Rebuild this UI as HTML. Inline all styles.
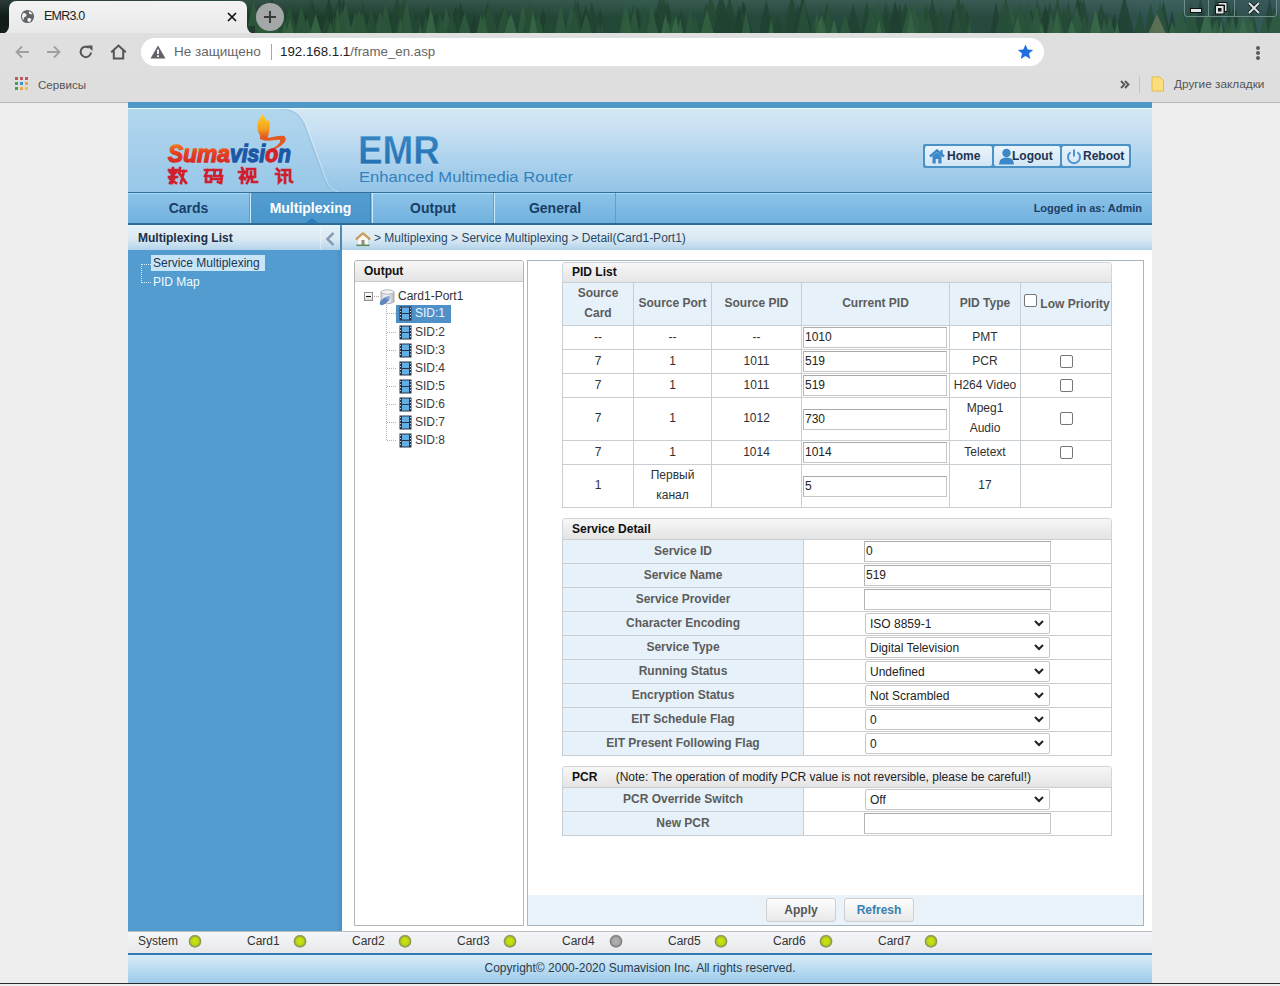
<!DOCTYPE html>
<html><head><meta charset="utf-8">
<style>
*{box-sizing:border-box;margin:0;padding:0}
html,body{width:1280px;height:986px;overflow:hidden}
body{position:relative;background:#eeeeee;font-family:"Liberation Sans",sans-serif;font-size:12px;color:#000}
.a{position:absolute}
/* chrome */
#tabstrip{left:0;top:0;width:1280px;height:33px;background:linear-gradient(90deg,#16231f 0%,#203a2f 15%,#24412f 35%,#2a4a38 55%,#2f5141 75%,#3a5c52 100%)}
#tab{left:9px;top:1px;width:238px;height:33px;background:linear-gradient(180deg,#f3f3f3,#e8e8e8);border-radius:7px 7px 0 0}
#toolbar{left:0;top:33px;width:1280px;height:37px;background:#dfdfdf}
#bookbar{left:0;top:70px;width:1280px;height:33px;background:#dedede;border-bottom:1px solid #b9b9b9}
#omni{left:141px;top:38px;width:903px;height:28px;background:#fff;border-radius:14px}
.ui{font-family:"Liberation Sans",sans-serif;color:#333;white-space:nowrap}
/* page */
#topbar{left:128px;top:102px;width:1024px;height:6px;background:#4f98c7}
#hdr{left:128px;top:108px;width:1024px;height:84px;background:linear-gradient(180deg,#d3e8f6 0%,#c6e1f3 45%,#9fcbe9 100%);border-top:1px solid #e8fbff;overflow:hidden}
#nav{left:128px;top:192px;width:1024px;height:33px;background:linear-gradient(180deg,#a6daf5 0px,#a6daf5 1px,#8cc3e7 1px,#7fbae4 50%,#70b3df 100%);border-top:1px solid #2f6f9a;border-bottom:2px solid #2d6c98}
.navi{position:absolute;top:0;height:30px;text-align:center;line-height:31px;font-size:14px;font-weight:bold;color:#173e66}
#side{left:128px;top:225px;width:214px;height:706px;background:#529ccf}
.lbar{background:linear-gradient(180deg,#e8f6fd 0px,#e8f6fd 1px,#e4eff8 2px,#dbe9f4 55%,#c9e0f0 75%,#b3d3ea 100%)}
#sidehdr{left:0;top:0;width:212px;height:25px;font-weight:bold;color:#1c2f45;line-height:26px;padding-left:10px}
#crumb{left:342px;top:225px;width:810px;height:25px;color:#1c3f66;line-height:26px}
#content{left:342px;top:250px;width:810px;height:681px;background:#fff}
#status{left:128px;top:931px;width:1024px;height:22px;background:linear-gradient(180deg,#f4f6f9,#e8e8ea);border-top:1px solid #bcbcbc}
#copy{left:128px;top:953px;width:1024px;height:30px;background:linear-gradient(180deg,#d9ecf8 0%,#9ccbeb 100%);border-top:2px solid #2f7bb3;text-align:center;line-height:27px;color:#2b3b4b}
.stl{position:absolute;top:934px;font-size:12px;color:#333}
.led{position:absolute;top:934px;width:14px;height:14px;border-radius:50%;background:radial-gradient(circle closest-side at 50% 52%,#cce414 0%,#bed80e 55%,#a5b82a 68%,#8b9560 84%,#b4bb98 94%,rgba(236,240,220,0.5) 100%)}
.led.off{background:radial-gradient(circle closest-side at 50% 52%,#b2b2b2 0%,#a6a6a6 55%,#969696 68%,#7d7d7d 84%,#b0b0b0 94%,rgba(236,236,236,0.5) 100%)}
/* panels */
.box{position:absolute;border:1px solid #b4b4b4;background:#fff;border-radius:3px 3px 0 0}
.bhdr{border-radius:2px 2px 0 0}
.bhdr{position:absolute;left:0;top:0;right:0;height:21px;background:linear-gradient(180deg,#f7f7f7 0%,#e4e4e4 100%);border-bottom:1px solid #c8c8c8;font-weight:bold;line-height:20px;padding-left:9px;color:#111}
table{border-collapse:collapse;position:absolute;table-layout:fixed}
td,th{padding-bottom:2px!important}
td .inp{position:relative;top:1px}
td .selx{top:1px}
td,th{border:1px solid #c9ced2;text-align:center;font-size:12px;color:#303030;font-weight:normal;padding:0;line-height:20px}
th{background:#e6f1f9;color:#5c5c5c;font-weight:bold}
td.lb{background:#e6f1f9;color:#5c5c5c;font-weight:bold}
.inp{display:block;border:1px solid #c6c6c6;border-top-color:#a9a9a9;border-left-color:#b5b5b5;height:21px;background:#fff;text-align:left;padding-left:1px;line-height:19px;font-size:12px;color:#222}
.sel{position:absolute;border:1px solid #c6c6c6;height:20px;background:#fff;text-align:left;padding-left:4px;line-height:18px;font-size:12px;color:#222}
.chk{display:inline-block;width:13px;height:13px;border:1px solid #767676;border-radius:2px;background:#fff;vertical-align:middle}
.btn{position:absolute;top:898px;width:70px;height:24px;border:1px solid #cfcfcf;border-radius:3px;background:linear-gradient(180deg,#fdfdfd 0%,#e9e9e9 100%);font-size:12px;font-weight:bold;text-align:center;line-height:22px}
.selx{position:relative;display:block;border:1px solid #c6c6c6;border-radius:2px;width:185px;height:21px;background:#fff;text-align:left;padding-left:4px;line-height:21px;font-size:12px;color:#222}
.hb{position:absolute;top:37px;height:20px;background:linear-gradient(180deg,#eaf4fb 0%,#d3e6f4 100%);border-radius:2px;font-weight:bold;color:#1b3552;font-size:12px;line-height:20px;text-align:right;padding-right:6px}
.hbt{position:absolute;top:37px;font-weight:bold;color:#1b3552;font-size:12px;line-height:21px;white-space:nowrap}
.tree{position:absolute;font-size:12px;color:#222;white-space:nowrap}
</style></head><body>
<div id="tabstrip" class="a"><svg width="1280" height="34" style="position:absolute;left:0;top:0">
<defs>
<linearGradient id="sky" x1="0" y1="0" x2="1" y2="0"><stop offset="0" stop-color="#101a17"/><stop offset="0.2" stop-color="#1c3a2a"/><stop offset="0.5" stop-color="#23493a"/><stop offset="0.8" stop-color="#27493f"/><stop offset="1" stop-color="#345a5c"/></linearGradient>
<linearGradient id="skyv" x1="0" y1="0" x2="0" y2="1"><stop offset="0" stop-color="#5a7a78" stop-opacity="0.35"/><stop offset="0.5" stop-color="#5a7a78" stop-opacity="0"/></linearGradient>
</defs>
<rect width="1280" height="34" fill="url(#sky)"/>
<rect width="1280" height="34" fill="url(#skyv)"/>
<g opacity="0.75"><path d="M578.1 34 L583.5 12.7 L589.0 34Z" fill="#1d3d2c"/>
<path d="M1090.9 34 L1095.9 13.9 L1100.9 34Z" fill="#214430"/>
<path d="M283.6 34 L288.6 6.5 L293.7 34Z" fill="#1d3d2c"/>
<path d="M812.8 34 L817.6 14.7 L822.3 34Z" fill="#214430"/>
<path d="M893.9 34 L899.5 3.2 L905.2 34Z" fill="#1e4030"/>
<path d="M295.5 34 L301.1 11.1 L306.7 34Z" fill="#214430"/>
<path d="M544.3 34 L548.3 12.8 L552.3 34Z" fill="#244a33"/>
<path d="M820.9 34 L827.1 1.0 L833.3 34Z" fill="#214430"/>
<path d="M628.1 34 L633.6 3.9 L639.1 34Z" fill="#1d3d2c"/>
<path d="M880.6 34 L887.6 5.1 L894.6 34Z" fill="#244a33"/>
<path d="M721.1 34 L729.6 -4.3 L738.0 34Z" fill="#214430"/>
<path d="M1061.4 34 L1068.2 0.6 L1075.1 34Z" fill="#244a33"/>
<path d="M781.0 34 L791.0 -3.3 L800.9 34Z" fill="#244a33"/>
<path d="M872.5 34 L877.2 14.4 L881.9 34Z" fill="#214430"/>
<path d="M1024.8 34 L1029.9 12.7 L1034.9 34Z" fill="#1d3d2c"/>
<path d="M1236.1 34 L1240.9 14.3 L1245.7 34Z" fill="#244a33"/>
<path d="M594.2 34 L600.3 8.3 L606.4 34Z" fill="#1e4030"/>
<path d="M316.6 34 L320.8 13.9 L325.0 34Z" fill="#1d3d2c"/>
<path d="M303.9 34 L312.5 0.6 L321.0 34Z" fill="#1e4030"/>
<path d="M536.3 34 L543.1 7.5 L550.0 34Z" fill="#1d3d2c"/>
<path d="M1212.4 34 L1218.9 8.2 L1225.4 34Z" fill="#1e4030"/>
<path d="M304.1 34 L310.7 -0.9 L317.4 34Z" fill="#214430"/>
<path d="M650.8 34 L659.8 -4.2 L668.9 34Z" fill="#214430"/>
<path d="M704.1 34 L712.7 3.9 L721.3 34Z" fill="#1e4030"/>
<path d="M1134.4 34 L1139.9 9.9 L1145.4 34Z" fill="#244a33"/>
<path d="M947.8 34 L953.2 7.6 L958.6 34Z" fill="#1d3d2c"/>
<path d="M426.8 34 L431.5 10.9 L436.2 34Z" fill="#1e4030"/>
<path d="M1101.4 34 L1106.0 12.0 L1110.7 34Z" fill="#214430"/>
<path d="M675.1 34 L681.5 7.9 L687.9 34Z" fill="#214430"/>
<path d="M953.8 34 L961.2 4.7 L968.6 34Z" fill="#1d3d2c"/>
<path d="M709.4 34 L720.3 -3.2 L731.3 34Z" fill="#1e4030"/>
<path d="M653.7 34 L660.0 7.3 L666.3 34Z" fill="#1e4030"/>
<path d="M310.2 34 L314.1 14.5 L318.0 34Z" fill="#214430"/>
<path d="M357.4 34 L363.2 2.8 L369.1 34Z" fill="#214430"/>
<path d="M792.9 34 L802.7 -4.9 L812.5 34Z" fill="#1d3d2c"/>
<path d="M1144.5 34 L1150.6 2.5 L1156.7 34Z" fill="#244a33"/>
<path d="M1226.8 34 L1234.1 2.7 L1241.5 34Z" fill="#1d3d2c"/>
<path d="M1115.1 34 L1124.4 -5.8 L1133.7 34Z" fill="#1e4030"/>
<path d="M565.5 34 L571.2 12.8 L576.9 34Z" fill="#244a33"/>
<path d="M735.0 34 L743.0 0.8 L750.9 34Z" fill="#214430"/>
<path d="M1223.8 34 L1229.5 4.4 L1235.2 34Z" fill="#1d3d2c"/>
<path d="M1024.6 34 L1030.9 9.4 L1037.2 34Z" fill="#1d3d2c"/>
<path d="M961.8 34 L967.1 10.3 L972.3 34Z" fill="#214430"/>
<path d="M610.8 34 L616.4 11.1 L621.9 34Z" fill="#244a33"/>
<path d="M896.9 34 L905.5 2.5 L914.1 34Z" fill="#214430"/>
<path d="M1070.6 34 L1080.3 -2.0 L1089.9 34Z" fill="#214430"/>
<path d="M448.2 34 L455.9 5.2 L463.6 34Z" fill="#1d3d2c"/>
<path d="M1058.2 34 L1063.8 5.6 L1069.5 34Z" fill="#244a33"/>
<path d="M699.1 34 L710.6 -4.6 L722.2 34Z" fill="#244a33"/>
<path d="M328.2 34 L333.0 13.8 L337.7 34Z" fill="#244a33"/>
<path d="M451.4 34 L460.5 2.3 L469.6 34Z" fill="#1d3d2c"/>
<path d="M735.0 34 L743.9 1.6 L752.8 34Z" fill="#1d3d2c"/>
<path d="M1105.1 34 L1109.7 13.4 L1114.3 34Z" fill="#214430"/>
<path d="M736.4 34 L742.4 12.1 L748.4 34Z" fill="#244a33"/>
<path d="M329.1 34 L339.4 -4.8 L349.6 34Z" fill="#1e4030"/>
<path d="M653.1 34 L663.4 -4.8 L673.7 34Z" fill="#214430"/>
<path d="M1268.3 34 L1272.9 15.4 L1277.5 34Z" fill="#1e4030"/>
<path d="M1074.8 34 L1080.7 12.8 L1086.6 34Z" fill="#1e4030"/>
<path d="M920.7 34 L927.0 8.3 L933.2 34Z" fill="#214430"/>
<path d="M262.6 34 L272.0 -1.6 L281.5 34Z" fill="#1d3d2c"/>
<path d="M783.5 34 L792.4 -4.5 L801.2 34Z" fill="#214430"/>
<path d="M1096.3 34 L1100.9 11.4 L1105.6 34Z" fill="#244a33"/>
<path d="M758.7 34 L766.2 -0.8 L773.7 34Z" fill="#1e4030"/>
<path d="M1104.0 34 L1109.2 14.7 L1114.4 34Z" fill="#1e4030"/>
<path d="M923.7 34 L932.3 -1.9 L941.0 34Z" fill="#214430"/>
<path d="M792.5 34 L797.8 4.5 L803.0 34Z" fill="#1e4030"/>
<path d="M1041.3 34 L1049.8 2.6 L1058.3 34Z" fill="#214430"/>
<path d="M420.0 34 L427.5 5.6 L435.1 34Z" fill="#1d3d2c"/>
<path d="M578.6 34 L585.8 4.6 L592.9 34Z" fill="#1d3d2c"/>
<path d="M1155.9 34 L1159.7 14.7 L1163.6 34Z" fill="#1d3d2c"/>
<path d="M1038.3 34 L1045.4 4.8 L1052.6 34Z" fill="#1d3d2c"/>
<path d="M699.0 34 L706.5 2.5 L714.0 34Z" fill="#214430"/>
<path d="M956.8 34 L963.5 6.0 L970.3 34Z" fill="#1e4030"/>
<path d="M767.3 34 L773.0 10.6 L778.6 34Z" fill="#244a33"/>
<path d="M1192.9 34 L1200.5 -3.6 L1208.0 34Z" fill="#1e4030"/>
<path d="M386.5 34 L391.2 13.3 L396.0 34Z" fill="#1d3d2c"/>
<path d="M935.8 34 L941.3 6.6 L946.8 34Z" fill="#244a33"/>
<path d="M1050.1 34 L1057.5 -3.7 L1064.8 34Z" fill="#244a33"/>
<path d="M386.2 34 L397.3 -3.4 L408.3 34Z" fill="#214430"/>
<path d="M1013.4 34 L1019.1 13.9 L1024.8 34Z" fill="#214430"/>
<path d="M1262.5 34 L1269.6 -2.3 L1276.7 34Z" fill="#1e4030"/>
<path d="M1267.8 34 L1273.9 7.1 L1280.0 34Z" fill="#244a33"/>
<path d="M572.1 34 L578.1 0.1 L584.1 34Z" fill="#1e4030"/>
<path d="M699.7 34 L703.7 15.6 L707.7 34Z" fill="#244a33"/>
<path d="M771.8 34 L777.6 14.6 L783.4 34Z" fill="#214430"/>
<path d="M1246.6 34 L1250.8 13.7 L1255.1 34Z" fill="#1d3d2c"/>
<path d="M1177.1 34 L1183.1 12.0 L1189.0 34Z" fill="#1e4030"/>
<path d="M1115.4 34 L1125.1 1.1 L1134.7 34Z" fill="#1e4030"/>
<path d="M394.4 34 L403.8 -4.2 L413.3 34Z" fill="#244a33"/>
<path d="M337.1 34 L342.1 14.7 L347.2 34Z" fill="#1e4030"/>
<path d="M1167.9 34 L1172.1 10.1 L1176.4 34Z" fill="#1d3d2c"/>
<path d="M1070.1 34 L1075.7 14.2 L1081.3 34Z" fill="#1d3d2c"/>
<path d="M518.7 34 L522.4 13.3 L526.0 34Z" fill="#1e4030"/>
<path d="M1199.9 34 L1204.5 10.1 L1209.0 34Z" fill="#214430"/>
<path d="M1208.1 34 L1216.3 -5.3 L1224.4 34Z" fill="#214430"/>
<path d="M452.5 34 L457.8 9.1 L463.1 34Z" fill="#214430"/>
<path d="M542.9 34 L548.7 5.0 L554.4 34Z" fill="#244a33"/>
<path d="M1070.6 34 L1077.8 -5.9 L1085.0 34Z" fill="#1d3d2c"/>
<path d="M999.1 34 L1005.1 3.9 L1011.1 34Z" fill="#1e4030"/>
<path d="M495.9 34 L503.0 6.2 L510.2 34Z" fill="#1e4030"/>
<path d="M917.6 34 L926.2 4.0 L934.8 34Z" fill="#244a33"/>
<path d="M949.7 34 L958.4 -5.6 L967.0 34Z" fill="#214430"/>
<path d="M662.2 34 L666.8 8.4 L671.5 34Z" fill="#214430"/>
<path d="M255.6 34 L264.7 2.2 L273.7 34Z" fill="#1e4030"/>
<path d="M412.6 34 L418.1 14.1 L423.7 34Z" fill="#244a33"/>
<path d="M860.7 34 L866.7 0.8 L872.7 34Z" fill="#214430"/>
<path d="M406.5 34 L412.3 6.2 L418.0 34Z" fill="#244a33"/>
<path d="M1245.6 34 L1251.8 4.0 L1258.0 34Z" fill="#244a33"/>
<path d="M469.6 34 L474.4 12.0 L479.2 34Z" fill="#1d3d2c"/>
<path d="M733.1 34 L738.9 4.9 L744.7 34Z" fill="#1d3d2c"/>
<path d="M336.6 34 L343.6 -2.0 L350.5 34Z" fill="#1d3d2c"/>
<path d="M649.6 34 L655.8 9.4 L662.0 34Z" fill="#1d3d2c"/>
<path d="M845.2 34 L853.2 4.4 L861.1 34Z" fill="#1e4030"/>
<path d="M1029.2 34 L1037.2 0.1 L1045.3 34Z" fill="#244a33"/>
<path d="M990.1 34 L995.9 1.8 L1001.7 34Z" fill="#1e4030"/>
<path d="M999.0 34 L1005.9 -1.9 L1012.8 34Z" fill="#1d3d2c"/>
<path d="M1092.4 34 L1101.2 3.2 L1110.0 34Z" fill="#214430"/>
<path d="M332.8 34 L337.6 15.1 L342.5 34Z" fill="#1d3d2c"/>
<path d="M632.9 34 L637.9 6.1 L643.0 34Z" fill="#1d3d2c"/>
<path d="M887.2 34 L895.0 1.0 L902.8 34Z" fill="#1d3d2c"/>
<path d="M715.0 34 L720.7 14.5 L726.4 34Z" fill="#1d3d2c"/>
<path d="M923.9 34 L929.1 14.5 L934.3 34Z" fill="#244a33"/>
<path d="M1076.0 34 L1083.5 -2.6 L1091.0 34Z" fill="#214430"/>
<path d="M480.1 34 L487.7 1.7 L495.2 34Z" fill="#1e4030"/>
<path d="M321.0 34 L329.0 -4.0 L337.1 34Z" fill="#1d3d2c"/>
<path d="M879.5 34 L885.5 1.9 L891.4 34Z" fill="#214430"/>
<path d="M583.3 34 L591.7 1.7 L600.2 34Z" fill="#214430"/>
<path d="M258.8 34 L262.8 14.7 L266.9 34Z" fill="#1d3d2c"/>
<path d="M956.0 34 L963.0 1.1 L969.9 34Z" fill="#244a33"/>
<path d="M723.2 34 L728.6 5.7 L734.0 34Z" fill="#214430"/>
<path d="M566.4 34 L571.0 14.1 L575.7 34Z" fill="#244a33"/>
<path d="M712.1 34 L722.7 -2.0 L733.4 34Z" fill="#1e4030"/>
<path d="M1266.1 34 L1273.8 7.5 L1281.5 34Z" fill="#214430"/>
<path d="M321.5 34 L326.9 14.0 L332.2 34Z" fill="#244a33"/>
<path d="M1225.5 34 L1231.3 13.1 L1237.1 34Z" fill="#244a33"/>
<path d="M1156.6 34 L1163.5 0.5 L1170.3 34Z" fill="#1e4030"/>
<path d="M649.6 34 L655.9 12.5 L662.2 34Z" fill="#1e4030"/>
<path d="M659.9 34 L667.6 0.0 L675.3 34Z" fill="#1e4030"/>
<path d="M569.2 34 L575.6 -2.5 L582.0 34Z" fill="#244a33"/>
<path d="M1108.3 34 L1114.3 13.4 L1120.3 34Z" fill="#1d3d2c"/>
<path d="M1174.5 34 L1178.6 15.6 L1182.7 34Z" fill="#315e40"/>
<path d="M646.1 34 L651.9 2.9 L657.6 34Z" fill="#315e40"/>
<path d="M1021.9 34 L1028.3 3.2 L1034.8 34Z" fill="#2a5538"/>
<path d="M1104.4 34 L1109.7 15.7 L1115.1 34Z" fill="#2e5a3c"/>
<path d="M1245.5 34 L1250.2 12.4 L1254.8 34Z" fill="#285036"/>
<path d="M1054.9 34 L1058.7 12.6 L1062.5 34Z" fill="#315e40"/>
<path d="M1182.9 34 L1190.8 1.3 L1198.8 34Z" fill="#2a5538"/>
<path d="M294.5 34 L301.0 5.9 L307.5 34Z" fill="#2e5a3c"/>
<path d="M910.5 34 L913.8 15.7 L917.1 34Z" fill="#2e5a3c"/>
<path d="M421.4 34 L425.9 12.9 L430.3 34Z" fill="#285036"/>
<path d="M1004.3 34 L1011.2 0.5 L1018.2 34Z" fill="#2e5a3c"/>
<path d="M554.4 34 L559.9 9.7 L565.3 34Z" fill="#2e5a3c"/>
<path d="M909.3 34 L912.5 20.3 L915.7 34Z" fill="#315e40"/>
<path d="M812.1 34 L816.9 12.0 L821.7 34Z" fill="#315e40"/>
<path d="M685.3 34 L690.2 9.9 L695.2 34Z" fill="#2e5a3c"/>
<path d="M599.3 34 L602.2 20.0 L605.1 34Z" fill="#285036"/>
<path d="M1080.7 34 L1083.6 17.6 L1086.6 34Z" fill="#315e40"/>
<path d="M638.6 34 L644.3 5.6 L650.0 34Z" fill="#285036"/>
<path d="M595.5 34 L598.3 20.6 L601.2 34Z" fill="#285036"/>
<path d="M373.8 34 L379.7 10.9 L385.5 34Z" fill="#2e5a3c"/>
<path d="M338.3 34 L345.4 2.3 L352.5 34Z" fill="#315e40"/>
<path d="M689.6 34 L694.8 15.1 L700.0 34Z" fill="#2a5538"/>
<path d="M375.3 34 L381.1 12.6 L386.8 34Z" fill="#315e40"/>
<path d="M1243.1 34 L1247.3 11.2 L1251.5 34Z" fill="#315e40"/>
<path d="M1248.1 34 L1251.4 16.5 L1254.7 34Z" fill="#2e5a3c"/>
<path d="M400.3 34 L406.6 0.6 L412.9 34Z" fill="#315e40"/>
<path d="M332.5 34 L337.6 4.9 L342.6 34Z" fill="#2e5a3c"/>
<path d="M481.3 34 L489.6 1.8 L497.8 34Z" fill="#285036"/>
<path d="M1235.1 34 L1241.3 8.2 L1247.5 34Z" fill="#315e40"/>
<path d="M966.9 34 L969.5 19.5 L972.2 34Z" fill="#2e5a3c"/>
<path d="M645.5 34 L649.7 17.1 L654.0 34Z" fill="#2a5538"/>
<path d="M796.5 34 L803.6 0.1 L810.7 34Z" fill="#285036"/>
<path d="M906.5 34 L913.9 2.6 L921.3 34Z" fill="#2e5a3c"/>
<path d="M810.5 34 L813.4 21.4 L816.3 34Z" fill="#285036"/>
<path d="M302.3 34 L307.0 17.7 L311.6 34Z" fill="#315e40"/>
<path d="M329.6 34 L333.5 17.0 L337.4 34Z" fill="#285036"/>
<path d="M480.8 34 L483.6 21.2 L486.4 34Z" fill="#315e40"/>
<path d="M619.5 34 L623.2 13.3 L626.8 34Z" fill="#285036"/>
<path d="M1006.7 34 L1011.3 10.9 L1015.9 34Z" fill="#2e5a3c"/>
<path d="M564.9 34 L571.1 4.0 L577.2 34Z" fill="#2e5a3c"/>
<path d="M517.0 34 L523.0 2.4 L528.9 34Z" fill="#315e40"/>
<path d="M870.9 34 L878.4 2.3 L885.9 34Z" fill="#2a5538"/>
<path d="M1223.8 34 L1227.2 18.8 L1230.6 34Z" fill="#2e5a3c"/>
<path d="M268.6 34 L274.3 8.9 L280.0 34Z" fill="#2a5538"/>
<path d="M433.8 34 L439.6 12.1 L445.4 34Z" fill="#285036"/>
<path d="M994.8 34 L1004.7 0.1 L1014.6 34Z" fill="#285036"/>
<path d="M440.1 34 L446.4 7.6 L452.7 34Z" fill="#315e40"/>
<path d="M276.9 34 L282.9 7.4 L288.8 34Z" fill="#285036"/>
<path d="M1260.4 34 L1264.5 12.3 L1268.6 34Z" fill="#2a5538"/>
<path d="M532.4 34 L538.2 14.3 L544.0 34Z" fill="#2a5538"/>
<path d="M821.6 34 L828.0 5.3 L834.3 34Z" fill="#285036"/>
<path d="M1092.8 34 L1096.7 12.5 L1100.6 34Z" fill="#315e40"/>
<path d="M446.1 34 L451.6 10.1 L457.1 34Z" fill="#285036"/>
<path d="M619.5 34 L625.2 2.3 L630.8 34Z" fill="#315e40"/>
<path d="M499.6 34 L505.5 8.2 L511.3 34Z" fill="#315e40"/>
<path d="M282.0 34 L285.9 20.6 L289.8 34Z" fill="#285036"/>
<path d="M447.4 34 L450.8 20.6 L454.1 34Z" fill="#285036"/>
<path d="M522.1 34 L530.5 0.9 L538.8 34Z" fill="#285036"/>
<path d="M1010.9 34 L1018.8 6.8 L1026.7 34Z" fill="#285036"/>
<path d="M245.6 34 L253.9 5.4 L262.2 34Z" fill="#2a5538"/>
<path d="M271.0 34 L275.0 16.9 L279.0 34Z" fill="#315e40"/>
<path d="M1228.3 34 L1232.5 13.5 L1236.8 34Z" fill="#315e40"/>
<path d="M1085.7 34 L1089.2 19.1 L1092.8 34Z" fill="#2a5538"/>
<path d="M1068.8 34 L1076.6 5.8 L1084.5 34Z" fill="#2e5a3c"/>
<path d="M871.3 34 L875.5 14.8 L879.6 34Z" fill="#285036"/>
<path d="M1051.3 34 L1057.3 8.9 L1063.3 34Z" fill="#315e40"/>
<path d="M1022.3 34 L1025.5 16.6 L1028.7 34Z" fill="#2a5538"/>
<path d="M741.5 34 L746.1 10.0 L750.8 34Z" fill="#315e40"/>
<path d="M1153.0 34 L1160.0 0.3 L1167.0 34Z" fill="#2a5538"/>
<path d="M458.2 34 L464.6 12.7 L470.9 34Z" fill="#315e40"/>
<path d="M424.9 34 L428.4 19.1 L431.9 34Z" fill="#2e5a3c"/>
<path d="M1012.5 34 L1020.4 3.4 L1028.3 34Z" fill="#2a5538"/>
<path d="M1049.3 34 L1053.1 15.5 L1057.0 34Z" fill="#285036"/>
<path d="M628.5 34 L634.2 5.8 L639.8 34Z" fill="#2e5a3c"/>
<path d="M437.7 34 L441.3 16.8 L444.9 34Z" fill="#2e5a3c"/>
<path d="M579.9 34 L586.1 13.3 L592.3 34Z" fill="#2e5a3c"/>
<path d="M915.8 34 L919.1 19.8 L922.4 34Z" fill="#2a5538"/>
<path d="M349.2 34 L355.4 11.6 L361.6 34Z" fill="#315e40"/>
<path d="M1189.1 34 L1191.8 21.1 L1194.5 34Z" fill="#2a5538"/>
<path d="M294.9 34 L301.9 8.8 L308.9 34Z" fill="#2e5a3c"/>
<path d="M1202.4 34 L1208.1 13.8 L1213.8 34Z" fill="#315e40"/>
<path d="M863.6 34 L871.1 5.0 L878.6 34Z" fill="#2a5538"/>
<path d="M352.6 34 L359.0 8.9 L365.3 34Z" fill="#2e5a3c"/>
<path d="M285.1 34 L288.6 14.5 L292.1 34Z" fill="#285036"/>
<path d="M281.3 34 L289.4 5.9 L297.5 34Z" fill="#2a5538"/>
<path d="M1088.7 34 L1093.4 13.0 L1098.0 34Z" fill="#285036"/>
<path d="M327.3 34 L330.3 21.3 L333.3 34Z" fill="#315e40"/>
<path d="M312.0 34 L315.2 19.8 L318.4 34Z" fill="#2e5a3c"/>
<path d="M905.6 34 L908.4 20.0 L911.1 34Z" fill="#285036"/>
<path d="M668.2 34 L672.1 15.8 L676.0 34Z" fill="#2a5538"/>
<path d="M566.4 34 L571.7 9.5 L577.1 34Z" fill="#315e40"/>
<path d="M260.8 34 L268.8 5.1 L276.7 34Z" fill="#2e5a3c"/>
<path d="M646.3 34 L652.5 13.1 L658.6 34Z" fill="#315e40"/>
<path d="M1172.8 34 L1178.7 12.7 L1184.6 34Z" fill="#315e40"/>
<path d="M839.7 34 L845.1 14.0 L850.6 34Z" fill="#2e5a3c"/>
<path d="M259.1 34 L265.3 9.9 L271.4 34Z" fill="#315e40"/>
<path d="M336.0 34 L341.7 8.3 L347.4 34Z" fill="#2e5a3c"/>
<path d="M395.9 34 L400.3 15.8 L404.6 34Z" fill="#2a5538"/>
<path d="M355.8 34 L362.1 11.2 L368.3 34Z" fill="#2e5a3c"/>
<path d="M555.2 34 L560.7 3.6 L566.2 34Z" fill="#315e40"/>
<path d="M567.5 34 L574.0 8.6 L580.4 34Z" fill="#2a5538"/>
<path d="M1174.2 34 L1181.3 8.4 L1188.5 34Z" fill="#2e5a3c"/>
<path d="M901.7 34 L909.5 3.2 L917.3 34Z" fill="#2e5a3c"/>
<path d="M1100.8 34 L1104.1 18.0 L1107.3 34Z" fill="#315e40"/>
<path d="M1213.3 34 L1216.7 18.6 L1220.1 34Z" fill="#2e5a3c"/>
<path d="M496.4 34 L504.5 6.1 L512.5 34Z" fill="#2a5538"/>
<path d="M1152.5 34 L1160.4 3.5 L1168.3 34Z" fill="#285036"/>
<path d="M365.1 34 L371.3 8.8 L377.4 34Z" fill="#285036"/>
<path d="M914.6 34 L918.5 15.2 L922.4 34Z" fill="#315e40"/>
<path d="M923.6 34 L928.6 12.2 L933.6 34Z" fill="#2a5538"/>
<path d="M245.8 34 L253.6 0.3 L261.5 34Z" fill="#315e40"/>
<path d="M1029.7 34 L1036.5 4.8 L1043.2 34Z" fill="#2e5a3c"/>
<path d="M1081.0 34 L1084.8 13.2 L1088.7 34Z" fill="#285036"/>
<path d="M690.3 34 L693.5 20.0 L696.7 34Z" fill="#2a5538"/>
<path d="M287.6 34 L291.9 19.1 L296.2 34Z" fill="#285036"/>
<path d="M1046.7 34 L1051.0 10.7 L1055.2 34Z" fill="#315e40"/>
<path d="M917.1 34 L922.3 4.7 L927.5 34Z" fill="#2a5538"/>
<path d="M1268.2 34 L1276.0 5.9 L1283.8 34Z" fill="#2e5a3c"/>
<path d="M378.9 34 L385.6 2.5 L392.2 34Z" fill="#2e5a3c"/>
<path d="M951.1 34 L956.7 6.1 L962.4 34Z" fill="#285036"/>
<path d="M875.7 34 L878.8 20.0 L881.8 34Z" fill="#3c6e48"/>
<path d="M528.8 34 L533.2 10.9 L537.7 34Z" fill="#3c6e48"/>
<path d="M1238.9 34 L1243.3 16.3 L1247.7 34Z" fill="#3c6e48"/>
<path d="M768.5 34 L771.2 18.9 L773.9 34Z" fill="#35653f"/>
<path d="M661.3 34 L665.6 13.8 L669.8 34Z" fill="#386a44"/>
<path d="M1168.8 34 L1172.3 21.3 L1175.7 34Z" fill="#35653f"/>
<path d="M1038.3 34 L1041.3 23.2 L1044.4 34Z" fill="#386a44"/>
<path d="M816.3 34 L821.8 14.7 L827.3 34Z" fill="#35653f"/>
<path d="M504.4 34 L509.6 15.4 L514.8 34Z" fill="#3c6e48"/>
<path d="M1067.3 34 L1071.6 19.8 L1075.9 34Z" fill="#3c6e48"/>
<path d="M397.7 34 L400.6 18.7 L403.4 34Z" fill="#35653f"/>
<path d="M428.1 34 L432.1 12.1 L436.0 34Z" fill="#3c6e48"/>
<path d="M505.2 34 L511.3 13.8 L517.3 34Z" fill="#3c6e48"/>
<path d="M1199.8 34 L1206.3 9.7 L1212.8 34Z" fill="#3c6e48"/>
<path d="M281.7 34 L284.8 21.6 L287.9 34Z" fill="#386a44"/>
<path d="M677.4 34 L680.2 18.2 L683.1 34Z" fill="#386a44"/>
<path d="M480.4 34 L484.1 13.6 L487.7 34Z" fill="#35653f"/>
<path d="M830.6 34 L834.1 19.1 L837.7 34Z" fill="#3c6e48"/>
<path d="M476.2 34 L481.0 14.7 L485.8 34Z" fill="#35653f"/>
<path d="M622.7 34 L627.2 10.7 L631.8 34Z" fill="#35653f"/>
<path d="M1212.0 34 L1214.7 20.1 L1217.4 34Z" fill="#35653f"/>
<path d="M312.4 34 L315.6 21.7 L318.8 34Z" fill="#386a44"/>
<path d="M661.5 34 L664.0 19.8 L666.5 34Z" fill="#3c6e48"/>
<path d="M1089.5 34 L1095.5 9.7 L1101.6 34Z" fill="#3c6e48"/>
<path d="M700.4 34 L707.1 9.0 L713.7 34Z" fill="#35653f"/>
<path d="M418.2 34 L420.1 24.0 L421.9 34Z" fill="#35653f"/>
<path d="M665.7 34 L668.2 20.2 L670.7 34Z" fill="#35653f"/>
<path d="M257.2 34 L262.7 15.2 L268.2 34Z" fill="#35653f"/>
<path d="M670.9 34 L675.6 15.7 L680.2 34Z" fill="#3c6e48"/>
<path d="M906.3 34 L910.8 11.0 L915.3 34Z" fill="#386a44"/>
<path d="M309.7 34 L315.7 14.0 L321.7 34Z" fill="#3c6e48"/>
<path d="M1052.7 34 L1056.5 12.6 L1060.2 34Z" fill="#386a44"/>
<path d="M1012.9 34 L1017.5 16.6 L1022.2 34Z" fill="#386a44"/>
<path d="M425.3 34 L430.7 8.1 L436.0 34Z" fill="#3c6e48"/>
<path d="M285.9 34 L290.0 18.6 L294.1 34Z" fill="#3c6e48"/>
<path d="M1218.6 34 L1221.1 19.8 L1223.7 34Z" fill="#3c6e48"/>
<path d="M815.8 34 L820.4 17.0 L825.0 34Z" fill="#3c6e48"/>
<path d="M1246.8 34 L1251.0 19.3 L1255.3 34Z" fill="#35653f"/>
<path d="M334.4 34 L338.0 15.9 L341.5 34Z" fill="#35653f"/>
<path d="M1114.4 34 L1117.0 20.8 L1119.6 34Z" fill="#386a44"/></g>
<path d="M1148 34 L1157 14 L1166 34Z" fill="#7d8466" opacity="0.6"/>
</svg></div>
<div id="tab" class="a"></div>
<div class="a" style="left:247px;top:26px;width:8px;height:8px;background:#ececec"><div style="width:8px;height:8px;background:#1f3a2e;border-bottom-left-radius:8px"></div></div>
<div class="a" style="left:1px;top:26px;width:8px;height:8px;background:#ececec"><div style="width:8px;height:8px;background:#141f1c;border-bottom-right-radius:8px"></div></div>
<div id="toolbar" class="a"></div>
<div id="bookbar" class="a"></div>
<div id="omni" class="a"></div>
<!-- window controls -->
<div class="a" style="left:1184px;top:-3px;width:93px;height:20px;border:1px solid #6f8e8a;border-radius:3px;background:rgba(40,70,70,0.35)"></div>
<div class="a" style="left:1208px;top:0;width:1px;height:16px;background:#6f8e8a"></div>
<div class="a" style="left:1234px;top:0;width:1px;height:16px;background:#6f8e8a"></div>
<div class="a" style="left:1190px;top:8px;width:12px;height:5px;background:#e0e6e6;border:1px solid #111"></div>
<svg class="a" style="left:1214px;top:1px" width="15" height="15" viewBox="0 0 15 15"><path d="M4 1.5 H13 V10.5 H10.5 V4 H4 Z" fill="#dde4e4" stroke="#111" stroke-width="1"/><rect x="1.5" y="4.5" width="8.5" height="8.5" fill="#dde4e4" stroke="#111" stroke-width="1"/><rect x="4" y="7" width="3.5" height="3.5" fill="#111"/></svg>
<svg class="a" style="left:1247px;top:2px" width="14" height="12" viewBox="0 0 14 12"><path d="M2 1 L12 11 M12 1 L2 11" stroke="#111" stroke-width="3.6"/><path d="M2 1 L12 11 M12 1 L2 11" stroke="#dfe6e6" stroke-width="2"/></svg>
<!-- tab contents -->
<svg class="a" style="left:20px;top:9px" width="15" height="15" viewBox="0 0 16 16"><circle cx="8" cy="8" r="7" fill="#5f6368"/><path d="M3 4.5 Q6 3.5 7 6 Q7.5 8 5 8.5 Q3.5 9 4 12 Q2 10 2 8 Z M9.5 2.2 Q12 3 13.5 5.5 Q11 6 10 5 Q9 4 9.5 2.2 Z M8 10 Q10.5 9 12 10.5 Q12.5 12.5 10 14 Q8 13.5 8 12 Z" fill="#f2f2f2"/></svg>
<div class="a ui" style="left:44px;top:9px;font-size:12.5px;letter-spacing:-0.8px;color:#222;line-height:15px">EMR3.0</div>
<svg class="a" style="left:227px;top:12px" width="10" height="10" viewBox="0 0 10 10"><path d="M1 1 L9 9 M9 1 L1 9" stroke="#111" stroke-width="1.7"/></svg>
<div class="a" style="left:256px;top:3px;width:28px;height:28px;border-radius:50%;background:#a3a7a7"></div>
<div class="a" style="left:264px;top:16px;width:12px;height:2px;background:#3a3a3a"></div>
<div class="a" style="left:269px;top:11px;width:2px;height:12px;background:#3a3a3a"></div>
<!-- toolbar icons -->
<svg class="a" style="left:14px;top:44px" width="16" height="16" viewBox="0 0 16 16"><path d="M15 8 H2.5 M8 2.5 L2.5 8 L8 13.5" fill="none" stroke="#a0a0a0" stroke-width="1.8"/></svg>
<svg class="a" style="left:46px;top:44px" width="16" height="16" viewBox="0 0 16 16"><path d="M1 8 H13.5 M8 2.5 L13.5 8 L8 13.5" fill="none" stroke="#a0a0a0" stroke-width="1.8"/></svg>
<svg class="a" style="left:78px;top:44px" width="16" height="16" viewBox="0 0 16 16"><path d="M13 8.5 A5.2 5.2 0 1 1 11 3.8" fill="none" stroke="#555" stroke-width="2"/><path d="M9 1.5 L14.5 1.5 L14.5 7 Z" fill="#555"/></svg>
<svg class="a" style="left:110px;top:44px" width="17" height="16" viewBox="0 0 17 16"><path d="M1.2 8.2 L8.5 1.5 L15.8 8.2 M3.8 6.5 V14.5 H13.2 V6.5" fill="none" stroke="#555" stroke-width="2"/></svg>
<svg class="a" style="left:150px;top:45px" width="16" height="14" viewBox="0 0 16 14"><path d="M8 0.5 L15.5 13.5 H0.5 Z" fill="#5f6368"/><rect x="7.1" y="4.5" width="1.8" height="4.5" fill="#fff"/><rect x="7.1" y="10.2" width="1.8" height="1.8" fill="#fff"/></svg>
<div class="a ui" style="left:174px;top:44px;font-size:13.5px;color:#666;line-height:16px">Не защищено</div>
<div class="a" style="left:271px;top:44px;width:1px;height:16px;background:#a8a8a8"></div>
<div class="a ui" style="left:280px;top:44px;font-size:13.3px;color:#222;line-height:16px">192.168.1.1<span style="color:#666">/frame_en.asp</span></div>
<svg class="a" style="left:1017px;top:44px" width="17" height="16" viewBox="0 0 24 23"><path d="M12 0.8 L15.2 8 L23 8.6 L17 13.8 L18.9 21.6 L12 17.4 L5.1 21.6 L7 13.8 L1 8.6 L8.8 8 Z" fill="#1f6fe0"/></svg>
<div class="a" style="left:1256px;top:46px;width:4px;height:4px;border-radius:50%;background:#5a5a5a"></div>
<div class="a" style="left:1256px;top:51px;width:4px;height:4px;border-radius:50%;background:#5a5a5a"></div>
<div class="a" style="left:1256px;top:56px;width:4px;height:4px;border-radius:50%;background:#5a5a5a"></div>
<!-- bookmarks -->
<svg class="a" style="left:15px;top:77px" width="14" height="14" viewBox="0 0 14 14">
<rect x="0" y="0" width="3" height="3" fill="#b85a58"/><rect x="5" y="0" width="3" height="3" fill="#b85a58"/><rect x="10" y="0" width="3" height="3" fill="#b85a58"/>
<rect x="0" y="5" width="3" height="3" fill="#4e9a5a"/><rect x="5" y="5" width="3" height="3" fill="#3f8ed6"/><rect x="10" y="5" width="3" height="3" fill="#e0a848"/>
<rect x="0" y="10" width="3" height="3" fill="#4e9a5a"/><rect x="5" y="10" width="3" height="3" fill="#eaa84a"/><rect x="10" y="10" width="3" height="3" fill="#e8c050"/></svg>
<div class="a ui" style="left:38px;top:77px;font-size:11.6px;color:#555;line-height:15px">Сервисы</div>
<svg class="a" style="left:1120px;top:80px" width="10" height="9" viewBox="0 0 10 9"><path d="M1 1 L4.5 4.5 L1 8 M5 1 L8.5 4.5 L5 8" fill="none" stroke="#555" stroke-width="1.8"/></svg>
<div class="a" style="left:1139px;top:76px;width:1px;height:17px;background:#c4c4c4"></div>
<svg class="a" style="left:1151px;top:76px" width="14" height="16" viewBox="0 0 14 16"><path d="M1 1 H9 L12.5 4.5 V15 H1 Z" fill="#fdde7c" stroke="#e3bc4c" stroke-width="1"/></svg>
<div class="a ui" style="left:1174px;top:77px;font-size:11.8px;color:#555;line-height:15px">Другие закладки</div>
<!-- page -->
<div id="topbar" class="a"></div>
<div id="hdr" class="a">
<svg width="1024" height="84" style="position:absolute;left:0;top:-1px">
<defs>
<linearGradient id="gR" x1="0" y1="0" x2="0" y2="1"><stop offset="0" stop-color="#d4e8f5"/><stop offset="0.25" stop-color="#c8e0f2"/><stop offset="0.55" stop-color="#b2d5ee"/><stop offset="1" stop-color="#93c4e6"/></linearGradient>
<linearGradient id="gL" x1="0" y1="0" x2="0" y2="1"><stop offset="0" stop-color="#b3d6ee"/><stop offset="1" stop-color="#97c7e8"/></linearGradient>
<linearGradient id="gEMR" x1="0" y1="0" x2="0" y2="1"><stop offset="0" stop-color="#3b8ccb"/><stop offset="1" stop-color="#1f6aad"/></linearGradient>
<linearGradient id="gSuma" x1="0" y1="0" x2="0" y2="1"><stop offset="0" stop-color="#f5a623"/><stop offset="0.45" stop-color="#e8401e"/><stop offset="1" stop-color="#d21f26"/></linearGradient>
<linearGradient id="gFlame" x1="0" y1="0" x2="0" y2="1"><stop offset="0" stop-color="#ffd21a"/><stop offset="0.6" stop-color="#f5a020"/><stop offset="1" stop-color="#e2461e"/></linearGradient>
</defs>
<rect x="0" y="0" width="1024" height="84" fill="url(#gR)"/>
<path d="M0 1 L152 1 C167 1 173 8 177 18 L193 62 C197 74 200 83 210 85 L0 85 Z" fill="url(#gL)"/>
<path d="M152 1 C167 1 173 8 177 18 L193 62 C197 74 200 83 210 85" fill="none" stroke="#88b6d6" stroke-width="1.6" opacity="0.45"/><path d="M153 0 C168 0 174 7 178.5 17.5 L194.5 61.5 C198.5 73.5 201.5 82 211 84" fill="none" stroke="#e8f4fb" stroke-width="1" opacity="0.5"/>
<!-- flame -->
<path d="M135 6 C128 13 128 22 133 29 L139 31 C142 24 143 16 140 11 C139 15 138 13 135 6 Z" fill="url(#gFlame)"/>
<path d="M132 28 C140 33 149 26 156 28 C161 31 156 40 135 45 C149 39 153 35 152 32 C147 31 140 35 132 31 Z" fill="#e5581f"/>
<text x="40" y="54" font-family="Liberation Sans" font-weight="bold" font-style="italic" font-size="24" textLength="62" lengthAdjust="spacingAndGlyphs" fill="url(#gSuma)" stroke="url(#gSuma)" stroke-width="1.3">Suma</text>
<text x="102" y="54" font-family="Liberation Sans" font-weight="bold" font-style="italic" font-size="24" textLength="61" lengthAdjust="spacingAndGlyphs" fill="#1b57a5" stroke="#1b57a5" stroke-width="1.3">visi<tspan fill="#d2232a" stroke="#d2232a">o</tspan>n</text>
<g fill="none" stroke="#cf1f2e" stroke-width="2.7" stroke-linecap="square">
 <!-- 数 -->
 <path d="M41 62 L49 62 M45 60 L45 67 M42 64 L44 66 M48 64 L46 66 M41 69 L49 69 M44 67 L42 75 M42 71 L48 75 M47 69 L44 75"/>
 <path d="M52 60 L51 65 M51 63 L58 63 M56 63 L53 75 M52 66 L58 75"/>
 <!-- 码 -->
 <path d="M77 62 L84 62 M80 62 L77 68 M78 68 L83 68 L83 74 L78 74 Z"/>
 <path d="M86 62 L93 62 L92 68 M87 62 L86 68 L94 68 L93 75 L90 74 M85 71 L91 71"/>
 <!-- 视 -->
 <path d="M114 60 L115 62 M111 64 L117 64 L112 70 M114 67 L114 75 M115 69 L117 71"/>
 <path d="M119 61 L127 61 L127 69 L119 69 Z M123 64 L123 69 M122 69 L119 75 M124 69 L124 74 L129 74"/>
 <!-- 讯 -->
 <path d="M149 61 L151 63 M148 66 L151 66 L151 74 L153 72"/>
 <path d="M154 62 L162 62 L162 73 L164 74 M157 62 L157 75 M154 67 L159 67"/>
</g>
<text x="230" y="56" font-family="Liberation Sans" font-weight="bold" font-size="41" textLength="82" lengthAdjust="spacingAndGlyphs" fill="url(#gEMR)" stroke="#cce4f4" stroke-width="0.3">EMR</text>
<text x="231" y="74" font-family="Liberation Sans" font-size="15" textLength="214" lengthAdjust="spacingAndGlyphs" fill="#3380bd">Enhanced Multimedia Router</text>
</svg>
<div class="a" style="left:795px;top:35px;width:208px;height:24px;border:2px solid #4b92c6;border-radius:2px;background:#4b92c6"></div>
<div class="hb" style="left:797px;width:67px"></div>
<div class="hb" style="left:866px;width:66px"></div>
<div class="hb" style="left:934px;width:67px"></div>
<div class="hbt" style="left:819px">Home</div>
<div class="hbt" style="left:884px">Logout</div>
<div class="hbt" style="left:955px">Reboot</div>
<svg class="a" style="left:801px;top:40px" width="16" height="15" viewBox="0 0 16 15"><path d="M1 7.5 L8 1.5 L15 7.5" fill="none" stroke="#3b87c8" stroke-width="2.4" stroke-linejoin="miter"/><path d="M3.5 7 L8 3.3 L12.5 7 L12.5 14.5 L9.3 14.5 L9.3 10 L6.7 10 L6.7 14.5 L3.5 14.5 Z" fill="#3b87c8"/><rect x="11.5" y="1" width="2.2" height="5" fill="#3b87c8"/></svg>
<svg class="a" style="left:870px;top:39px" width="16" height="17" viewBox="0 0 16 17"><circle cx="8.5" cy="5" r="4.2" fill="#3b87c8"/><path d="M1 16.5 Q1 9.5 8.5 9.5 Q16 9.5 16 16.5 Z" fill="#3b87c8"/></svg>
<svg class="a" style="left:938px;top:39px" width="16" height="17" viewBox="0 0 16 17"><path d="M4.6 4.2 A6 6 0 1 0 11.4 4.2" fill="none" stroke="#4a94cf" stroke-width="2"/><rect x="7" y="1.5" width="2" height="7" fill="#4a94cf"/></svg>
</div>
<div id="nav" class="a">
  <div class="navi" style="left:0;width:121px">Cards</div>
  <div class="a" style="left:121px;top:0;width:1px;height:30px;background:#5d9fcf"></div>
  <div class="a" style="left:122px;top:0;width:1px;height:30px;background:#c9ebfb"></div>
  <div class="navi" style="left:123px;width:120px;background:linear-gradient(180deg,#539dd0,#4a95c9);color:#fff;border-right:1px solid #3f86bb">Multiplexing</div>
  <div class="a" style="left:178px;top:25px;width:0;height:0;border-left:6px solid transparent;border-right:6px solid transparent;border-bottom:5px solid #2a7cbf"></div>
  <div class="a" style="left:244px;top:0;width:1px;height:30px;background:#c9ebfb"></div>
  <div class="navi" style="left:245px;width:120px">Output</div>
  <div class="a" style="left:365px;top:0;width:1px;height:30px;background:#5d9fcf"></div>
  <div class="a" style="left:366px;top:0;width:1px;height:30px;background:#c9ebfb"></div>
  <div class="navi" style="left:367px;width:120px">General</div>
  <div class="a" style="left:487px;top:0;width:1px;height:30px;background:#5d9fcf"></div>
  <div class="a" style="right:10px;top:0;line-height:30px;font-size:11px;font-weight:bold;color:#1c3f66">Logged in as: Admin</div>
</div>
<div id="side" class="a" style="height:706px">
  <div id="sidehdr" class="a lbar">Multiplexing List</div>
  <div class="a" style="left:212px;top:2px;width:2px;height:23px;background:#4f88b0"></div><div class="a" style="left:209px;top:25px;width:5px;height:681px;background:linear-gradient(90deg,#4f98cc,#4a93c8)"></div>
</div>
<div id="crumb" class="a lbar"><span style="padding-left:32px;color:#2a4763">&gt; Multiplexing &gt; Service Multiplexing &gt; Detail(Card1-Port1)</span></div>
<div id="content" class="a"></div>

<!-- output panel -->
<div class="box" style="left:354px;top:260px;width:170px;height:666px">
  <div class="bhdr">Output</div>
</div>


<!-- output tree -->
<div class="a" style="left:364px;top:292px;width:9px;height:9px;border:1px solid #8f8f8f;background:linear-gradient(180deg,#fff,#ddd)"><div class="a" style="left:1px;top:3px;width:5px;height:1px;background:#111"></div></div>
<div class="a" style="left:374px;top:296px;width:5px;border-top:1px dotted #aaa"></div>
<svg class="a" style="left:378px;top:289px" width="18" height="17" viewBox="0 0 18 17">
 <defs><linearGradient id="cyl" x1="0" y1="0" x2="1" y2="0"><stop offset="0" stop-color="#cfd3d8"/><stop offset="0.5" stop-color="#f7f8f9"/><stop offset="1" stop-color="#b4b9bf"/></linearGradient></defs>
 <path d="M3 3 Q9.5 -0.5 16 3 L16 13 Q9.5 16.5 3 13 Z" fill="url(#cyl)" stroke="#9aa0a6" stroke-width="0.8"/>
 <ellipse cx="9.5" cy="3" rx="6.5" ry="2.2" fill="#f3f4f5" stroke="#a4a9ae" stroke-width="0.8"/>
 <path d="M2 15.5 Q1 13 4 10.5 L7.5 8 Q10 7 11 9 Q12 11 9.5 13 L6 15.5 Q3.5 17 2 15.5 Z" fill="#5f86c0"/><path d="M7 9 L10.5 6.5 L12.5 8.5 L10 11 Z" fill="#86a6d6"/></svg>
<div class="tree" style="left:398px;top:288px;line-height:16px;color:#333">Card1-Port1</div>
<div class="a" style="left:386px;top:305px;height:135px;border-left:1px dotted #b5b5b5"></div>
<div class="a" style="left:387px;top:313px;width:9px;border-top:1px dotted #b5b5b5"></div>
<div class="a" style="left:396px;top:305px;width:55px;height:18px;background:#5090c8"></div>
<div class="a" style="left:396px;top:305px;width:60px;height:18px"><svg width="13" height="15" viewBox="0 0 13 15" style="position:absolute;left:3px;top:1px"><rect x="0.5" y="0.5" width="12" height="14" fill="#2b3440"/><rect x="3" y="1.5" width="7" height="5.5" fill="#62aee6"/><rect x="3" y="8" width="7" height="5.5" fill="#62aee6"/><g fill="#c9d3dc"><rect x="1" y="2" width="1" height="1"/><rect x="1" y="5" width="1" height="1"/><rect x="1" y="8" width="1" height="1"/><rect x="1" y="11" width="1" height="1"/><rect x="11" y="2" width="1" height="1"/><rect x="11" y="5" width="1" height="1"/><rect x="11" y="8" width="1" height="1"/><rect x="11" y="11" width="1" height="1"/></g></svg><div class="tree" style="left:19px;top:0px;line-height:16px;color:#eef6ff">SID:1</div></div>
<div class="a" style="left:387px;top:332px;width:9px;border-top:1px dotted #b5b5b5"></div>
<div class="a" style="left:396px;top:324px;width:60px;height:18px"><svg width="13" height="15" viewBox="0 0 13 15" style="position:absolute;left:3px;top:1px"><rect x="0.5" y="0.5" width="12" height="14" fill="#2b3440"/><rect x="3" y="1.5" width="7" height="5.5" fill="#62aee6"/><rect x="3" y="8" width="7" height="5.5" fill="#62aee6"/><g fill="#c9d3dc"><rect x="1" y="2" width="1" height="1"/><rect x="1" y="5" width="1" height="1"/><rect x="1" y="8" width="1" height="1"/><rect x="1" y="11" width="1" height="1"/><rect x="11" y="2" width="1" height="1"/><rect x="11" y="5" width="1" height="1"/><rect x="11" y="8" width="1" height="1"/><rect x="11" y="11" width="1" height="1"/></g></svg><div class="tree" style="left:19px;top:0px;line-height:16px;color:#3a3a3a">SID:2</div></div>
<div class="a" style="left:387px;top:350px;width:9px;border-top:1px dotted #b5b5b5"></div>
<div class="a" style="left:396px;top:342px;width:60px;height:18px"><svg width="13" height="15" viewBox="0 0 13 15" style="position:absolute;left:3px;top:1px"><rect x="0.5" y="0.5" width="12" height="14" fill="#2b3440"/><rect x="3" y="1.5" width="7" height="5.5" fill="#62aee6"/><rect x="3" y="8" width="7" height="5.5" fill="#62aee6"/><g fill="#c9d3dc"><rect x="1" y="2" width="1" height="1"/><rect x="1" y="5" width="1" height="1"/><rect x="1" y="8" width="1" height="1"/><rect x="1" y="11" width="1" height="1"/><rect x="11" y="2" width="1" height="1"/><rect x="11" y="5" width="1" height="1"/><rect x="11" y="8" width="1" height="1"/><rect x="11" y="11" width="1" height="1"/></g></svg><div class="tree" style="left:19px;top:0px;line-height:16px;color:#3a3a3a">SID:3</div></div>
<div class="a" style="left:387px;top:368px;width:9px;border-top:1px dotted #b5b5b5"></div>
<div class="a" style="left:396px;top:360px;width:60px;height:18px"><svg width="13" height="15" viewBox="0 0 13 15" style="position:absolute;left:3px;top:1px"><rect x="0.5" y="0.5" width="12" height="14" fill="#2b3440"/><rect x="3" y="1.5" width="7" height="5.5" fill="#62aee6"/><rect x="3" y="8" width="7" height="5.5" fill="#62aee6"/><g fill="#c9d3dc"><rect x="1" y="2" width="1" height="1"/><rect x="1" y="5" width="1" height="1"/><rect x="1" y="8" width="1" height="1"/><rect x="1" y="11" width="1" height="1"/><rect x="11" y="2" width="1" height="1"/><rect x="11" y="5" width="1" height="1"/><rect x="11" y="8" width="1" height="1"/><rect x="11" y="11" width="1" height="1"/></g></svg><div class="tree" style="left:19px;top:0px;line-height:16px;color:#3a3a3a">SID:4</div></div>
<div class="a" style="left:387px;top:386px;width:9px;border-top:1px dotted #b5b5b5"></div>
<div class="a" style="left:396px;top:378px;width:60px;height:18px"><svg width="13" height="15" viewBox="0 0 13 15" style="position:absolute;left:3px;top:1px"><rect x="0.5" y="0.5" width="12" height="14" fill="#2b3440"/><rect x="3" y="1.5" width="7" height="5.5" fill="#62aee6"/><rect x="3" y="8" width="7" height="5.5" fill="#62aee6"/><g fill="#c9d3dc"><rect x="1" y="2" width="1" height="1"/><rect x="1" y="5" width="1" height="1"/><rect x="1" y="8" width="1" height="1"/><rect x="1" y="11" width="1" height="1"/><rect x="11" y="2" width="1" height="1"/><rect x="11" y="5" width="1" height="1"/><rect x="11" y="8" width="1" height="1"/><rect x="11" y="11" width="1" height="1"/></g></svg><div class="tree" style="left:19px;top:0px;line-height:16px;color:#3a3a3a">SID:5</div></div>
<div class="a" style="left:387px;top:404px;width:9px;border-top:1px dotted #b5b5b5"></div>
<div class="a" style="left:396px;top:396px;width:60px;height:18px"><svg width="13" height="15" viewBox="0 0 13 15" style="position:absolute;left:3px;top:1px"><rect x="0.5" y="0.5" width="12" height="14" fill="#2b3440"/><rect x="3" y="1.5" width="7" height="5.5" fill="#62aee6"/><rect x="3" y="8" width="7" height="5.5" fill="#62aee6"/><g fill="#c9d3dc"><rect x="1" y="2" width="1" height="1"/><rect x="1" y="5" width="1" height="1"/><rect x="1" y="8" width="1" height="1"/><rect x="1" y="11" width="1" height="1"/><rect x="11" y="2" width="1" height="1"/><rect x="11" y="5" width="1" height="1"/><rect x="11" y="8" width="1" height="1"/><rect x="11" y="11" width="1" height="1"/></g></svg><div class="tree" style="left:19px;top:0px;line-height:16px;color:#3a3a3a">SID:6</div></div>
<div class="a" style="left:387px;top:422px;width:9px;border-top:1px dotted #b5b5b5"></div>
<div class="a" style="left:396px;top:414px;width:60px;height:18px"><svg width="13" height="15" viewBox="0 0 13 15" style="position:absolute;left:3px;top:1px"><rect x="0.5" y="0.5" width="12" height="14" fill="#2b3440"/><rect x="3" y="1.5" width="7" height="5.5" fill="#62aee6"/><rect x="3" y="8" width="7" height="5.5" fill="#62aee6"/><g fill="#c9d3dc"><rect x="1" y="2" width="1" height="1"/><rect x="1" y="5" width="1" height="1"/><rect x="1" y="8" width="1" height="1"/><rect x="1" y="11" width="1" height="1"/><rect x="11" y="2" width="1" height="1"/><rect x="11" y="5" width="1" height="1"/><rect x="11" y="8" width="1" height="1"/><rect x="11" y="11" width="1" height="1"/></g></svg><div class="tree" style="left:19px;top:0px;line-height:16px;color:#3a3a3a">SID:7</div></div>
<div class="a" style="left:387px;top:440px;width:9px;border-top:1px dotted #b5b5b5"></div>
<div class="a" style="left:396px;top:432px;width:60px;height:18px"><svg width="13" height="15" viewBox="0 0 13 15" style="position:absolute;left:3px;top:1px"><rect x="0.5" y="0.5" width="12" height="14" fill="#2b3440"/><rect x="3" y="1.5" width="7" height="5.5" fill="#62aee6"/><rect x="3" y="8" width="7" height="5.5" fill="#62aee6"/><g fill="#c9d3dc"><rect x="1" y="2" width="1" height="1"/><rect x="1" y="5" width="1" height="1"/><rect x="1" y="8" width="1" height="1"/><rect x="1" y="11" width="1" height="1"/><rect x="11" y="2" width="1" height="1"/><rect x="11" y="5" width="1" height="1"/><rect x="11" y="8" width="1" height="1"/><rect x="11" y="11" width="1" height="1"/></g></svg><div class="tree" style="left:19px;top:0px;line-height:16px;color:#3a3a3a">SID:8</div></div>

<!-- sidebar tree -->
<div class="a" style="left:141px;top:264px;width:1px;height:19px;border-left:1px dotted #dceefa"></div>
<div class="a" style="left:142px;top:264px;width:9px;border-top:1px dotted #dceefa"></div>
<div class="a" style="left:142px;top:282px;width:9px;border-top:1px dotted #dceefa"></div>
<div class="a" style="left:151px;top:255px;width:114px;height:16px;background:#c8e5f7"></div>
<div class="tree" style="left:153px;top:255px;line-height:16px;color:#1c3550">Service Multiplexing</div>
<div class="tree" style="left:153px;top:274px;line-height:16px;color:#f4faff">PID Map</div>
<!-- collapse -->
<div class="a" style="left:320px;top:227px;width:1px;height:22px;background:rgba(240,250,255,0.5)"></div>
<svg class="a" style="left:324px;top:231px" width="12" height="16" viewBox="0 0 12 16"><path d="M9.5 2 L3.5 8 L9.5 14" fill="none" stroke="#51708f" stroke-width="2.2"/><path d="M9.5 2 L3.5 8 L9.5 14" fill="none" stroke="#dfeaf3" stroke-width="0.8"/></svg>
<!-- crumb home -->
<svg class="a" style="left:354px;top:231px" width="18" height="16" viewBox="0 0 18 16">
 <path d="M2 8.5 L9 2.5 L16 8.5" fill="none" stroke="#c99c5a" stroke-width="2.6" stroke-linejoin="round"/>
 <path d="M4 8 L9 3.8 L14 8 L14 14 L4 14 Z" fill="#fbf6ec"/>
 <rect x="7.5" y="9" width="3" height="5" fill="#8a8f94"/>
 <rect x="2.5" y="13.5" width="13" height="1.6" fill="#5f8f55"/>
</svg>
<!-- right panel -->
<div class="box" style="left:527px;top:260px;width:617px;height:666px;border-color:#a8b6c0;border-radius:0">
  <div class="a" style="left:0;top:634px;width:615px;height:30px;background:#eaf3fa"></div>
</div>


<!-- PID list -->
<div class="box" style="left:562px;top:262px;width:550px;height:246px;border-color:#cfd6dc">
  <div class="bhdr" style="line-height:18px">PID List</div>
</div>
<table class="pid" style="left:562px;top:282px;width:549px">
<colgroup><col style="width:71px"><col style="width:78px"><col style="width:90px"><col style="width:148px"><col style="width:71px"><col style="width:91px"></colgroup>
<tr style="height:43px"><th>Source<br>Card</th><th>Source Port</th><th>Source PID</th><th>Current PID</th><th>PID Type</th><th style="white-space:nowrap;text-align:left;padding-left:3px;padding-top:2px"><span class="chk" style="margin-top:-3px;position:relative;top:-3px"></span> Low Priority</th></tr>
<tr style="height:24px"><td>--</td><td>--</td><td>--</td><td><span class="inp" style="margin-left:1px;width:144px">1010</span></td><td>PMT</td><td></td></tr>
<tr style="height:24px"><td>7</td><td>1</td><td>1011</td><td><span class="inp" style="margin-left:1px;width:144px">519</span></td><td>PCR</td><td><span class="chk"></span></td></tr>
<tr style="height:24px"><td>7</td><td>1</td><td>1011</td><td><span class="inp" style="margin-left:1px;width:144px">519</span></td><td>H264 Video</td><td><span class="chk"></span></td></tr>
<tr style="height:43px"><td>7</td><td>1</td><td>1012</td><td><span class="inp" style="margin-left:1px;width:144px">730</span></td><td>Mpeg1<br>Audio</td><td><span class="chk"></span></td></tr>
<tr style="height:24px"><td>7</td><td>1</td><td>1014</td><td><span class="inp" style="margin-left:1px;width:144px">1014</span></td><td>Teletext</td><td><span class="chk"></span></td></tr>
<tr style="height:43px"><td>1</td><td>Первый<br>канал</td><td></td><td><span class="inp" style="margin-left:1px;width:144px">5</span></td><td>17</td><td></td></tr>
</table>

<!-- Service detail -->
<div class="box" style="left:562px;top:518px;width:550px;height:238px;border-color:#cfd6dc">
  <div class="bhdr">Service Detail</div>
</div>
<table style="left:562px;top:539px;width:549px">
<colgroup><col style="width:241px"><col style="width:308px"></colgroup>
<tr style="height:24px"><td class="lb">Service ID</td><td style="text-align:left"><span class="inp" style="margin-left:60px;width:187px;height:21px">0</span></td></tr>
<tr style="height:24px"><td class="lb">Service Name</td><td style="text-align:left"><span class="inp" style="margin-left:60px;width:187px;height:21px">519</span></td></tr>
<tr style="height:24px"><td class="lb">Service Provider</td><td style="text-align:left"><span class="inp" style="margin-left:60px;width:187px;height:21px"></span></td></tr>
<tr style="height:24px"><td class="lb">Character Encoding</td><td style="text-align:left"><span class="selx" style="margin-left:61px">ISO 8859-1<svg width="10" height="7" viewBox="0 0 10 7" style="position:absolute;right:5px;top:6px"><path d="M1 1 L5 5 L9 1" fill="none" stroke="#222" stroke-width="2"/></svg></span></td></tr>
<tr style="height:24px"><td class="lb">Service Type</td><td style="text-align:left"><span class="selx" style="margin-left:61px">Digital Television<svg width="10" height="7" viewBox="0 0 10 7" style="position:absolute;right:5px;top:6px"><path d="M1 1 L5 5 L9 1" fill="none" stroke="#222" stroke-width="2"/></svg></span></td></tr>
<tr style="height:24px"><td class="lb">Running Status</td><td style="text-align:left"><span class="selx" style="margin-left:61px">Undefined<svg width="10" height="7" viewBox="0 0 10 7" style="position:absolute;right:5px;top:6px"><path d="M1 1 L5 5 L9 1" fill="none" stroke="#222" stroke-width="2"/></svg></span></td></tr>
<tr style="height:24px"><td class="lb">Encryption Status</td><td style="text-align:left"><span class="selx" style="margin-left:61px">Not Scrambled<svg width="10" height="7" viewBox="0 0 10 7" style="position:absolute;right:5px;top:6px"><path d="M1 1 L5 5 L9 1" fill="none" stroke="#222" stroke-width="2"/></svg></span></td></tr>
<tr style="height:24px"><td class="lb">EIT Schedule Flag</td><td style="text-align:left"><span class="selx" style="margin-left:61px">0<svg width="10" height="7" viewBox="0 0 10 7" style="position:absolute;right:5px;top:6px"><path d="M1 1 L5 5 L9 1" fill="none" stroke="#222" stroke-width="2"/></svg></span></td></tr>
<tr style="height:24px"><td class="lb">EIT Present Following Flag</td><td style="text-align:left"><span class="selx" style="margin-left:61px">0<svg width="10" height="7" viewBox="0 0 10 7" style="position:absolute;right:5px;top:6px"><path d="M1 1 L5 5 L9 1" fill="none" stroke="#222" stroke-width="2"/></svg></span></td></tr>
</table>
<!-- PCR -->
<div class="box" style="left:562px;top:766px;width:550px;height:70px;border-color:#cfd6dc">
  <div class="bhdr">PCR <span style="font-weight:normal;margin-left:15px;color:#222">(Note: The operation of modify PCR value is not reversible, please be careful!)</span></div>
</div>
<table style="left:562px;top:787px;width:549px">
<colgroup><col style="width:241px"><col style="width:308px"></colgroup>
<tr style="height:24px"><td class="lb">PCR Override Switch</td><td style="text-align:left"><span class="selx" style="margin-left:61px">Off<svg width="10" height="7" viewBox="0 0 10 7" style="position:absolute;right:5px;top:6px"><path d="M1 1 L5 5 L9 1" fill="none" stroke="#222" stroke-width="2"/></svg></span></td></tr>
<tr style="height:24px"><td class="lb">New PCR</td><td style="text-align:left"><span class="inp" style="margin-left:60px;width:187px;height:21px"></span></td></tr>
</table>
<div class="btn" style="left:766px;color:#555">Apply</div>
<div class="btn" style="left:844px;color:#3a80b0">Refresh</div>

<div id="status" class="a"></div>
<div class="stl" style="left:138px">System</div><div class="led" style="left:188px"></div>
<div class="stl" style="left:247px">Card1</div><div class="led" style="left:293px"></div>
<div class="stl" style="left:352px">Card2</div><div class="led" style="left:398px"></div>
<div class="stl" style="left:457px">Card3</div><div class="led" style="left:503px"></div>
<div class="stl" style="left:562px">Card4</div><div class="led off" style="left:609px"></div>
<div class="stl" style="left:668px">Card5</div><div class="led" style="left:714px"></div>
<div class="stl" style="left:773px">Card6</div><div class="led" style="left:819px"></div>
<div class="stl" style="left:878px">Card7</div><div class="led" style="left:924px"></div>
<div id="copy" class="a">Copyright© 2000-2020 Sumavision Inc. All rights reserved.</div>
<div class="a" style="left:0;top:983px;width:1280px;height:1px;background:#2a2a2a"></div>
</body></html>
